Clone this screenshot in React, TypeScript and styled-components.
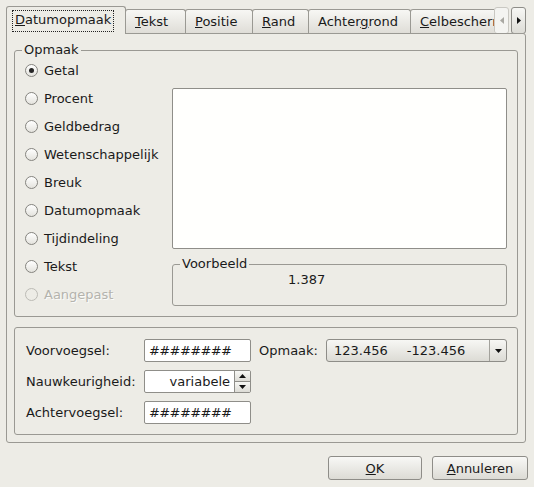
import React from "react";
import styled, { createGlobalStyle } from "styled-components";

const GlobalStyle = createGlobalStyle`
  html, body {
    margin: 0;
    padding: 0;
    background: #edece6;
  }
  body {
    font-family: "DejaVu Sans", "Liberation Sans", sans-serif;
    font-size: 13px;
    color: #1a1a1a;
  }
`;

const Dialog = styled.div`
  width: 534px;
  height: 487px;
  box-sizing: border-box;
  padding: 6px 8px 0 6px;
  display: flex;
  flex-direction: column;
`;

const TabBar = styled.div`
  display: flex;
  align-items: flex-end;
  height: 28px;
`;

const TabStrip = styled.div`
  flex: 1;
  min-width: 0;
  height: 28px;
  display: flex;
  align-items: flex-end;
  overflow: hidden;
`;

const Tab = styled.div<{ $active?: boolean; $width?: number }>`
  flex-shrink: 0;
  box-sizing: border-box;
  width: ${(p) => (p.$width ? `${p.$width}px` : "auto")};
  display: flex;
  align-items: center;
  white-space: nowrap;
  line-height: 14px;
  border: 1px solid #9a9993;
  border-bottom: none;
  border-radius: 3px 3px 0 0;
  margin-right: -1px;
  height: ${(p) => (p.$active ? "28px" : "25px")};
  padding: ${(p) => (p.$active ? "0 0 0 6px" : "0 0 1px 9px")};
  background: ${(p) =>
    p.$active ? "#edece6" : "linear-gradient(#f7f7f4, #dedcd6)"};
  position: ${(p) => (p.$active ? "relative" : "static")};
  z-index: ${(p) => (p.$active ? 2 : "auto")};
`;

const FocusLabel = styled.span`
  padding: 2px 2px 4px;
  outline: 1px dotted #222;
`;

const ScrollButtons = styled.div`
  display: flex;
  gap: 2px;
  align-items: flex-end;
  height: 28px;
`;

const ScrollButton = styled.div<{ $disabled?: boolean }>`
  width: 15px;
  height: 27px;
  box-sizing: border-box;
  display: flex;
  align-items: center;
  justify-content: center;
  border: 1px solid ${(p) => (p.$disabled ? "#c9c8c2" : "#8e8d88")};
  border-radius: 3px;
  background: ${(p) =>
    p.$disabled ? "#f4f4f1" : "linear-gradient(#f7f7f4, #dddcd6)"};
`;

const Pane = styled.div`
  position: relative;
  z-index: 1;
  margin-top: -1px;
  height: 410px;
  box-sizing: border-box;
  border: 1px solid #9a9993;
  border-radius: 0 3px 3px 3px;
  background: #edece6;
  padding: 9px 7px 0 7px;
  display: flex;
  flex-direction: column;
`;

const Frame = styled.fieldset<{ $height: number }>`
  margin: 0;
  min-width: 0;
  box-sizing: border-box;
  height: ${(p) => p.$height}px;
  border: 1px solid #9a9993;
  border-radius: 3px;
  padding: 0 10px 0 10px;
`;

const Legend = styled.legend<{ $offset: number }>`
  padding: 0 2px;
  margin-left: ${(p) => p.$offset}px;
  line-height: 14px;
`;

const FormatGrid = styled.div`
  display: grid;
  grid-template-columns: 147px 1fr;
`;

const RadioList = styled.div`
  margin-top: -1px;
  display: flex;
  flex-direction: column;
`;

const RadioRow = styled.label<{ $disabled?: boolean }>`
  height: 28px;
  display: flex;
  align-items: center;
  gap: 6px;
  color: ${(p) => (p.$disabled ? "#b4b3ad" : "#1a1a1a")};
  text-shadow: ${(p) => (p.$disabled ? "1px 1px 0 #fbfbf9" : "none")};
`;

const RadioDot = styled.span<{ $checked?: boolean; $disabled?: boolean }>`
  width: 13px;
  height: 13px;
  box-sizing: border-box;
  border-radius: 50%;
  border: 1px solid ${(p) => (p.$disabled ? "#bcbbb5" : "#85847f")};
  background: ${(p) =>
    p.$disabled ? "#edece6" : "linear-gradient(#ffffff, #e4e3dd)"};
  display: flex;
  align-items: center;
  justify-content: center;

  &::after {
    content: "";
    width: 5px;
    height: 5px;
    border-radius: 50%;
    background: ${(p) => (p.$checked ? "#262626" : "transparent")};
  }
`;

const RightColumn = styled.div`
  margin-top: 31px;
  display: flex;
  flex-direction: column;
`;

const ListBox = styled.div`
  height: 161px;
  box-sizing: border-box;
  border: 1px solid #8f8e89;
  border-radius: 2px;
  background: #fffffd;
`;

const PreviewFrame = styled(Frame)`
  margin-top: 8px;
  padding: 1px 0 0 115px;
`;

const PreviewValue = styled.div`
  line-height: 16px;
`;

const OptionsFrame = styled(Frame)`
  margin-top: 10px;
  padding: 11px 10px 0 11px;
`;

const OptionsGrid = styled.div`
  display: grid;
  grid-template-columns: 110px 107px auto 1fr;
  grid-auto-rows: 23px;
  column-gap: 8px;
  row-gap: 8px;
  align-items: center;
`;

const FieldLabel = styled.span`
  white-space: nowrap;
`;

const TextField = styled.div<{ $align?: string }>`
  height: 23px;
  box-sizing: border-box;
  border: 1px solid #8f8e89;
  border-radius: 2px;
  background: #ffffff;
  display: flex;
  align-items: center;
  justify-content: ${(p) => p.$align || "flex-start"};
  padding: 0 4px;
  letter-spacing: ${(p) => (p.$align ? "0" : "-0.6px")};
`;

const SpinField = styled.div`
  height: 23px;
  box-sizing: border-box;
  border: 1px solid #8f8e89;
  border-radius: 2px;
  background: #ffffff;
  display: flex;
  overflow: hidden;
`;

const SpinValue = styled.div`
  flex: 1;
  display: flex;
  align-items: center;
  justify-content: flex-end;
  padding-right: 4px;
`;

const SpinButtons = styled.div`
  width: 15px;
  display: flex;
  flex-direction: column;
  border-left: 1px solid #8f8e89;
`;

const SpinButton = styled.div<{ $bottom?: boolean }>`
  flex: 1;
  display: flex;
  align-items: center;
  justify-content: center;
  background: linear-gradient(#f7f7f4, #dddcd6);
  border-top: ${(p) => (p.$bottom ? "1px solid #8f8e89" : "none")};
`;

const Combo = styled.div`
  height: 23px;
  box-sizing: border-box;
  border: 1px solid #8e8d88;
  border-radius: 3px;
  background: linear-gradient(#f7f7f4, #dcdbd5);
  display: flex;
  align-items: center;
`;

const ComboText = styled.div`
  flex: 1;
  display: flex;
  gap: 19px;
  padding-left: 7px;
`;

const ComboArrow = styled.div`
  width: 16px;
  align-self: stretch;
  border-left: 1px solid #a3a29c;
  display: flex;
  align-items: center;
  justify-content: center;
`;

const ButtonRow = styled.div`
  margin-top: 13px;
  margin-right: -2px;
  display: flex;
  justify-content: flex-end;
  gap: 10px;
`;

const Button = styled.button<{ $width: number }>`
  width: ${(p) => p.$width}px;
  height: 24px;
  box-sizing: border-box;
  border: 1px solid #8e8d88;
  border-radius: 3px;
  background: linear-gradient(#f8f8f6, #dcdbd5);
  font: inherit;
  color: #1a1a1a;
  padding: 0;
`;

const Triangle = ({ dir, color = "#111" }: { dir: "left" | "right" | "up" | "down"; color?: string }) => {
  const points = {
    left: "4,0 4,7 0,3.5",
    right: "0,0 0,7 4,3.5",
    up: "0,4 7,4 3.5,0",
    down: "0,0 7,0 3.5,4",
  }[dir];
  const horizontal = dir === "left" || dir === "right";
  return (
    <svg width={horizontal ? 4 : 7} height={horizontal ? 7 : 4} viewBox={horizontal ? "0 0 4 7" : "0 0 7 4"}>
      <polygon points={points} fill={color} />
    </svg>
  );
};

const tabs = [
  { key: "D", rest: "atumopmaak", width: 120 },
  { key: "T", rest: "ekst", width: 61 },
  { key: "P", rest: "ositie", width: 68 },
  { key: "R", rest: "and", width: 57 },
];

const categories = [
  "Getal",
  "Procent",
  "Geldbedrag",
  "Wetenschappelijk",
  "Breuk",
  "Datumopmaak",
  "Tijdindeling",
  "Tekst",
];

export default function App() {
  return (
    <>
      <GlobalStyle />
      <Dialog>
        <TabBar>
          <TabStrip>
            {tabs.map((t, i) => (
              <Tab key={t.rest} $active={i === 0} $width={t.width}>
                {i === 0 ? (
                  <FocusLabel>
                    <u>{t.key}</u>
                    {t.rest}
                  </FocusLabel>
                ) : (
                  <span>
                    <u>{t.key}</u>
                    {t.rest}
                  </span>
                )}
              </Tab>
            ))}
            <Tab $width={103}>
              <span>
                Achter<u>g</u>rond
              </span>
            </Tab>
            <Tab $width={110}>
              <span>
                <u>C</u>elbescherming
              </span>
            </Tab>
          </TabStrip>
          <ScrollButtons>
            <ScrollButton $disabled>
              <Triangle dir="left" color="#a9a8a2" />
            </ScrollButton>
            <ScrollButton>
              <Triangle dir="right" />
            </ScrollButton>
          </ScrollButtons>
        </TabBar>

        <Pane>
          <Frame $height={274}>
            <Legend $offset={-3}>Opmaak</Legend>
            <FormatGrid>
              <RadioList>
                {categories.map((c, i) => (
                  <RadioRow key={c}>
                    <RadioDot $checked={i === 0} />
                    {c}
                  </RadioRow>
                ))}
                <RadioRow $disabled>
                  <RadioDot $disabled />
                  Aangepast
                </RadioRow>
              </RadioList>
              <RightColumn>
                <ListBox />
                <PreviewFrame $height={49}>
                  <Legend $offset={-108}>Voorbeeld</Legend>
                  <PreviewValue>1.387</PreviewValue>
                </PreviewFrame>
              </RightColumn>
            </FormatGrid>
          </Frame>

          <OptionsFrame $height={108}>
            <OptionsGrid>
              <FieldLabel>Voorvoegsel:</FieldLabel>
              <TextField>########</TextField>
              <FieldLabel>Opmaak:</FieldLabel>
              <Combo>
                <ComboText>
                  <span>123.456</span>
                  <span>-123.456</span>
                </ComboText>
                <ComboArrow>
                  <Triangle dir="down" />
                </ComboArrow>
              </Combo>

              <FieldLabel>Nauwkeurigheid:</FieldLabel>
              <SpinField>
                <SpinValue>variabele</SpinValue>
                <SpinButtons>
                  <SpinButton>
                    <Triangle dir="up" />
                  </SpinButton>
                  <SpinButton $bottom>
                    <Triangle dir="down" />
                  </SpinButton>
                </SpinButtons>
              </SpinField>
              <span />
              <span />

              <FieldLabel>Achtervoegsel:</FieldLabel>
              <TextField>########</TextField>
            </OptionsGrid>
          </OptionsFrame>
        </Pane>

        <ButtonRow>
          <Button $width={94}>
            <u>O</u>K
          </Button>
          <Button $width={96}>
            <u>A</u>nnuleren
          </Button>
        </ButtonRow>
      </Dialog>
    </>
  );
}
